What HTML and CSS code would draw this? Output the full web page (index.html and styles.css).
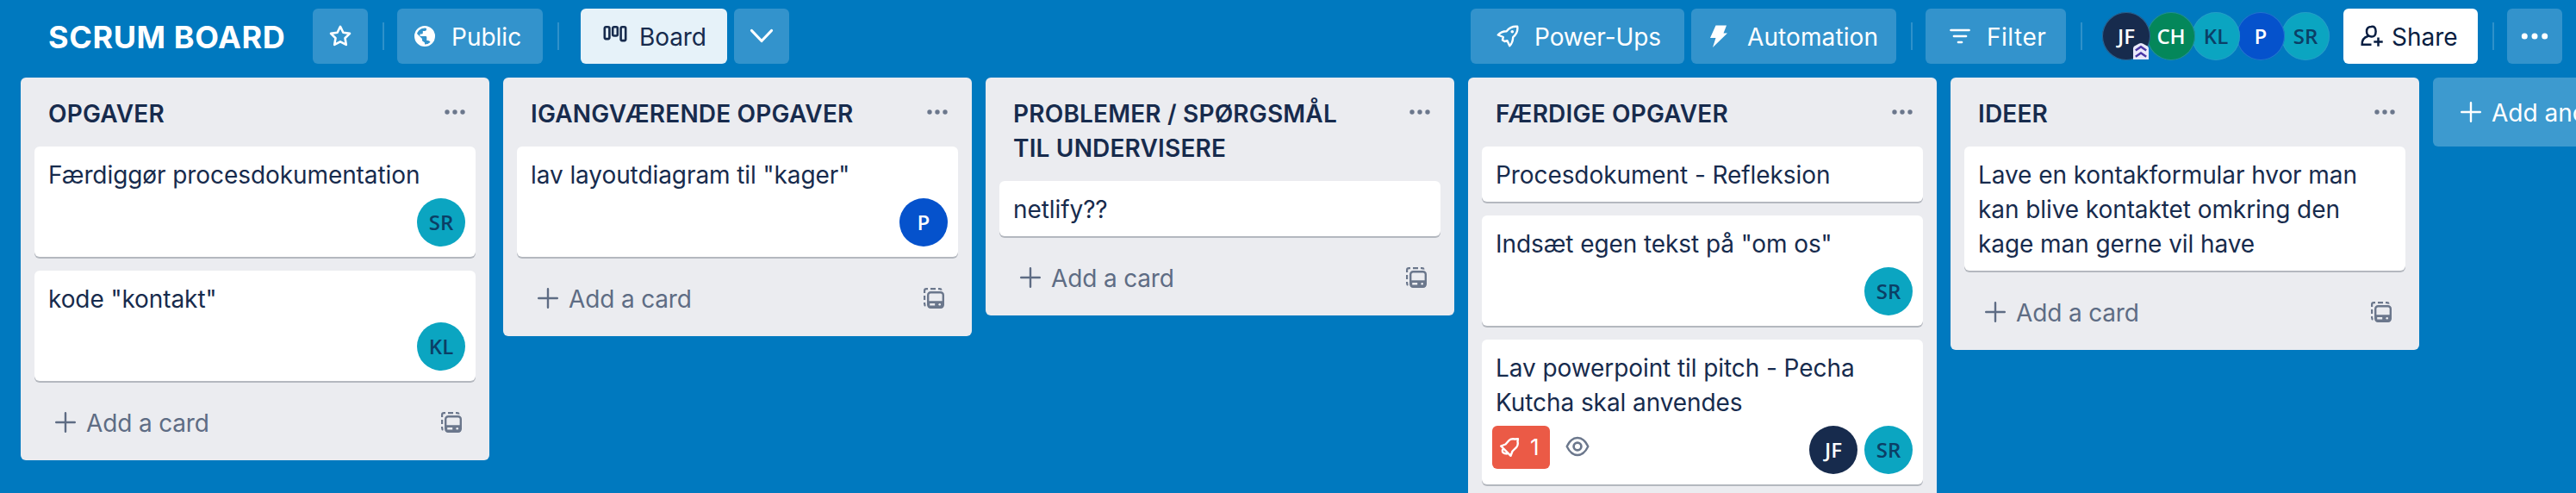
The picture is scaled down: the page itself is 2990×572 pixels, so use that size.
FILE: index.html
```html
<!DOCTYPE html>
<html lang="da">
<head>
<meta charset="utf-8">
<title>SCRUM BOARD</title>
<link rel="stylesheet" href="styles.css">
</head>
<body>
<svg class="defs" aria-hidden="true">
  <symbol id="plus" viewBox="0 0 24 24"><path d="M12 1.2v21.6M1.2 12h21.6" fill="none" stroke="currentColor" stroke-width="2.4" stroke-linecap="round"/></symbol>
  <symbol id="dots" viewBox="0 0 24 6"><circle cx="3" cy="3" r="2.7"/><circle cx="12" cy="3" r="2.7"/><circle cx="21" cy="3" r="2.7"/></symbol>
  <symbol id="template" viewBox="0 0 24 24">
    <path d="M1.1 6V3.3Q1.1 1.1 3.3 1.1H5M8 1.1h6M17 1.1h1.6Q20.4 1.1 20.6 2.6M1.1 9v5M1.1 17v1.6Q1.1 20.4 2.4 20.8" fill="none" stroke="currentColor" stroke-width="2.2"/>
    <rect x="5.2" y="5.2" width="17.6" height="17.6" rx="3" fill="none" stroke="currentColor" stroke-width="2.4"/>
    <path d="M5 15.3h18v6q0 2-2 2H7q-2 0-2-2zM7.2 18v2.4h6V18z" fill-rule="evenodd"/><circle cx="18.7" cy="19.2" r="1.3" class="template-dot"/>
  </symbol>
</svg>

<header class="header">
  <h1 class="title">SCRUM BOARD</h1>
  <button class="btn btn-square star"><svg width="28" height="28" viewBox="0 0 28 28"><path d="M14 2.8l3.4 7 7.6 1.1-5.5 5.4 1.3 7.6-6.8-3.6-6.8 3.6 1.3-7.6L3 10.9l7.6-1.1z" fill="none" stroke="currentColor" stroke-width="2.6" stroke-linejoin="round"/></svg></button>
  <span class="divider"></span>
  <button class="btn public"><svg width="24" height="24" viewBox="0 0 24 24"><circle cx="12" cy="12" r="10.8" fill="none" stroke="currentColor" stroke-width="2.4"/><path d="M2 8l7 7v2.2l3 2.4V23C5 23 1 17 2 8zM14 1.5v2.700q0 1.800-2 1.800H9.800v2.200q0 1.300-1.300 1.300H6.500V12H13q1.300 0 1.300 1.300V17h1.500q1.700 0 2.400 1.600l1.500 1.300C25 13 22.500 4 14 1.500z"/></svg><span>Public</span></button>
  <span class="divider"></span>
  <button class="btn board-view"><svg width="28" height="24" viewBox="0 0 28 24"><g fill="none" stroke="currentColor" stroke-width="2.6"><rect x="1.8" y="2.3" width="5.6" height="13.8" rx="1.5"/><rect x="11.2" y="2.3" width="5.6" height="10.2" rx="1.5"/><rect x="20.6" y="2.3" width="5.6" height="15.8" rx="1.5"/></g></svg><span>Board</span></button>
  <button class="btn btn-square chevron"><svg width="28" height="18" viewBox="0 0 28 18"><path d="M2.5 2.5L14 14.5 25.5 2.5" fill="none" stroke="currentColor" stroke-width="3.2" stroke-linecap="round" stroke-linejoin="round"/></svg></button>

  <div class="tools">
    <button class="btn power"><svg width="26" height="26" viewBox="0 0 26 26"><path d="M24.2 1.8C19 1.2 15 3 11.7 7.2 8 7.3 4 9 1.8 11.5L7.8 14 7 17.5 9.5 19 12.5 18.2 15.3 24.2C18 21.5 19 18 19.2 14.2 23.5 10.5 25 6.5 24.2 1.8z" fill="none" stroke="currentColor" stroke-width="2.4" stroke-linejoin="round"/><circle cx="18.3" cy="7.8" r="1.8"/></svg><span>Power-Ups</span></button>
    <button class="btn auto"><svg width="20" height="26" viewBox="0 0 20 26"><path d="M6.5.5H19L15.5 9.5H20L3 26 6.5 15H0z"/></svg><span>Automation</span></button>
    <span class="divider"></span>
    <button class="btn filter"><svg width="24" height="18" viewBox="0 0 24 18"><path d="M1.5 2h21M5 9h14M10 16h4" fill="none" stroke="currentColor" stroke-width="2.7" stroke-linecap="round"/></svg><span>Filter</span></button>
    <span class="divider"></span>
    <div class="members">
      <span class="avatar navy">JF<svg class="admin" width="18" height="19" viewBox="0 0 18 19"><path d="M0 19V6Q0 4.5 1.5 3.5L7 .5q2-1 4 0l5.5 3Q18 4.5 18 6v13z" fill="#e9e9fa"/><path d="M2.8 8.5L9 4.2l6.2 4.3M2.8 15.8L9 11.5l6.2 4.3" fill="none" stroke="#4936a5" stroke-width="2.4"/></svg></span>
      <span class="avatar green">CH</span>
      <span class="avatar teal">KL</span>
      <span class="avatar blue">P</span>
      <span class="avatar teal">SR</span>
    </div>
    <button class="btn share"><svg width="26" height="26" viewBox="0 0 26 26"><path d="M12.5 22.8H1.7C1.5 18 4 14.3 8.5 13M12.3 2Q7 2 7 7.5T12.3 13.5 17.6 7.5 12.3 2zM20.5 14.5v10.3M15.3 19.6h10.4" fill="none" stroke="currentColor" stroke-width="2.5"/></svg><span>Share</span></button>
    <span class="divider"></span>
    <button class="btn btn-square menu"><svg width="32" height="8" viewBox="0 0 32 8"><circle cx="4.3" cy="4" r="3.5"/><circle cx="16" cy="4" r="3.5"/><circle cx="27.7" cy="4" r="3.5"/></svg></button>
  </div>
</header>

<main class="board">
  <section class="list">
    <div class="list-head"><h2>OPGAVER</h2><svg class="dots"><use href="#dots"/></svg></div>
    <article class="card"><p>Færdiggør procesdokumentation</p><div class="meta"><span class="avatar teal">SR</span></div></article>
    <article class="card"><p>kode "kontakt"</p><div class="meta"><span class="avatar teal">KL</span></div></article>
    <div class="list-foot"><svg class="icon"><use href="#plus"/></svg><span>Add a card</span><svg class="icon template"><use href="#template"/></svg></div>
  </section>

  <section class="list">
    <div class="list-head"><h2>IGANGVÆRENDE OPGAVER</h2><svg class="dots"><use href="#dots"/></svg></div>
    <article class="card"><p>lav layoutdiagram til "kager"</p><div class="meta"><span class="avatar blue">P</span></div></article>
    <div class="list-foot"><svg class="icon"><use href="#plus"/></svg><span>Add a card</span><svg class="icon template"><use href="#template"/></svg></div>
  </section>

  <section class="list">
    <div class="list-head"><h2>PROBLEMER / SPØRGSMÅL TIL UNDERVISERE</h2><svg class="dots"><use href="#dots"/></svg></div>
    <article class="card"><p>netlify??</p></article>
    <div class="list-foot"><svg class="icon"><use href="#plus"/></svg><span>Add a card</span><svg class="icon template"><use href="#template"/></svg></div>
  </section>

  <section class="list list-tall">
    <div class="list-head"><h2>FÆRDIGE OPGAVER</h2><svg class="dots"><use href="#dots"/></svg></div>
    <article class="card"><p>Procesdokument - Refleksion</p></article>
    <article class="card"><p>Indsæt egen tekst på "om os"</p><div class="meta"><span class="avatar teal">SR</span></div></article>
    <article class="card"><p>Lav powerpoint til pitch - Pecha Kutcha skal anvendes</p>
      <div class="meta">
        <span class="badge"><svg width="24" height="24" viewBox="0 0 24 24"><path d="M2.2 10.5L13.5 21.8 15.5 16.5 20 12.2Q22.5 9 21.5 5.5L21.9 2.1 18.5 2.5Q14 1.5 11.5 4L7.5 8.5zM4.3 14.2Q2.3 19.5 9.7 19.6" fill="none" stroke="currentColor" stroke-width="2.4" stroke-linejoin="round"/></svg><span>1</span></span>
        <svg class="eye" width="28" height="24" viewBox="0 0 28 24"><path d="M1.7 12Q6.5 2 14 2t12.3 10Q21.5 22 14 22T1.7 12z" fill="none" stroke="currentColor" stroke-width="2.4" stroke-linejoin="round"/><circle cx="14" cy="12" r="4.4" fill="none" stroke="currentColor" stroke-width="2.7"/></svg>
        <span class="avatar navy">JF</span><span class="avatar teal">SR</span>
      </div>
    </article>
  </section>

  <section class="list">
    <div class="list-head"><h2>IDEER</h2><svg class="dots"><use href="#dots"/></svg></div>
    <article class="card"><p>Lave en kontakformular hvor man kan blive kontaktet omkring den kage man gerne vil have</p></article>
    <div class="list-foot"><svg class="icon"><use href="#plus"/></svg><span>Add a card</span><svg class="icon template"><use href="#template"/></svg></div>
  </section>

  <div class="add-list"><svg class="icon"><use href="#plus"/></svg><span>Add another list</span></div>
</main>
</body>
</html>
```
FILE: styles.css
```css
* { box-sizing: border-box; }
html, body { height: 100%; }
body {
  margin: 0;
  overflow: hidden;
  background: #0079bf;
  color: #172b4d;
  font: 400 28px/40px Inter, "Liberation Sans", sans-serif;
}
h1, h2, p { margin: 0; }
svg { display: block; flex: none; fill: currentColor; }
.defs { position: absolute; width: 0; height: 0; }

.header {
  display: flex;
  align-items: center;
  height: 90px;
  padding: 0 16px 6px 56px;
  color: #fff;
}
.title {
  width: 307px;
  padding-top: 1px;
  font-size: 36px;
  font-weight: 700;
  line-height: 48px;
  letter-spacing: 0.6px;
  white-space: nowrap;
}
.btn {
  display: flex;
  flex: none;
  align-items: center;
  height: 64px;
  padding: 0;
  border: 0;
  border-radius: 6px;
  background: #3393cc;
  color: #fff;
  font: inherit;
  white-space: nowrap;
}
.btn span { padding-top: 1px; }
.btn-square { width: 64px; justify-content: center; }
.divider { flex: none; width: 2px; height: 32px; margin: 0 15px 0 17px; background: #2f91ca; }

.public { width: 169px; padding-left: 20px; gap: 19px; }
.public + .divider { margin-right: 25px; }
.board-view { width: 170px; padding-left: 26px; gap: 14px; background: #e6f2f9; color: #172b4d; letter-spacing: -0.1px; }
.board-view svg { margin-top: -2px; }
.chevron { margin-left: 8px; }

.tools { display: flex; align-items: center; margin-left: auto; }
.power { width: 248px; padding-left: 30px; gap: 18px; letter-spacing: -0.1px; }
.auto { width: 238px; margin-left: 8px; padding-left: 22px; gap: 23px; letter-spacing: 0.1px; }
.filter { width: 163px; padding-left: 28px; gap: 19px; letter-spacing: 0.5px; }
.filter + .divider { margin-right: 23px; }
.members { display: flex; margin-right: 16px; }
.members .avatar { position: relative; box-shadow: inset 0 0 0 1px rgba(60, 150, 205, 0.55); }
.members .avatar + .avatar { margin-left: -4px; }
.members .avatar:nth-child(1) { z-index: 5; }
.members .avatar:nth-child(2) { z-index: 4; }
.members .avatar:nth-child(3) { z-index: 3; }
.members .avatar:nth-child(4) { z-index: 2; }
.admin { position: absolute; right: 2px; bottom: 1px; }
.share { width: 156px; padding-left: 20px; gap: 10px; background: #fff; color: #091e42; }

.avatar {
  display: flex;
  flex: none;
  align-items: center;
  justify-content: center;
  width: 56px;
  height: 56px;
  border-radius: 50%;
  font: 600 24px/56px "Open Sans", "Noto Sans", sans-serif;
}
.teal { background: #0ba5c1; color: #0b3f66; }
.navy { background: #172b4d; color: #fff; }
.green { background: #04875a; color: #fff; }
.blue { background: #0552cc; color: #fff; }

.board {
  display: flex;
  align-items: flex-start;
  gap: 16px;
  height: calc(100% - 90px);
  padding-left: 24px;
  overflow: hidden;
}
.list {
  flex: none;
  width: 544px;
  padding: 0 16px;
  border-radius: 6px;
  background: #ebecf0;
}
.list-tall { height: 100%; border-radius: 6px 6px 0 0; }
.list-head { display: flex; justify-content: space-between; padding: 22px 12px 18px 16px; }
.list-head h2 { width: 400px; font-size: 28px; font-weight: 600; letter-spacing: 0.18px; }
.dots { width: 24px; height: 6px; margin-top: 15px; color: #6b778c; }
.card {
  padding: 13px 12px 11px 16px;
  border-radius: 6px;
  background: #fff;
  box-shadow: 0 2px 0 #b4b8bf;
}
.card p { letter-spacing: -0.08px; }
.card + .card { margin-top: 16px; }
.meta { display: flex; justify-content: flex-end; gap: 8px; margin: 7px 0 1px; }
.badge {
  display: flex;
  align-items: center;
  gap: 12px;
  width: 67px;
  height: 50px;
  margin-left: -4px;
  padding-left: 8px;
  border-radius: 6px;
  background: #eb5a46;
  color: #fff;
  font-size: 26px;
}
.eye { margin: 12px auto 0 10px; color: #6b778c; }
.list-foot { display: flex; align-items: center; height: 92px; padding: 4px 16px 0 24px; gap: 12px; color: #5e6c84; }
.list-foot span { padding-top: 2px; letter-spacing: -0.15px; }
.icon { width: 24px; height: 24px; }
.template { margin-left: auto; color: #6b778c; }
.template-dot { fill: #ebecf0; }
.add-list {
  display: flex;
  flex: none;
  align-items: center;
  width: 544px;
  height: 80px;
  padding-left: 32px;
  gap: 12px;
  border-radius: 6px;
  background: #3d9acf;
  color: #fff;
  white-space: nowrap;
}
.add-list span { padding-top: 2px; }
```
